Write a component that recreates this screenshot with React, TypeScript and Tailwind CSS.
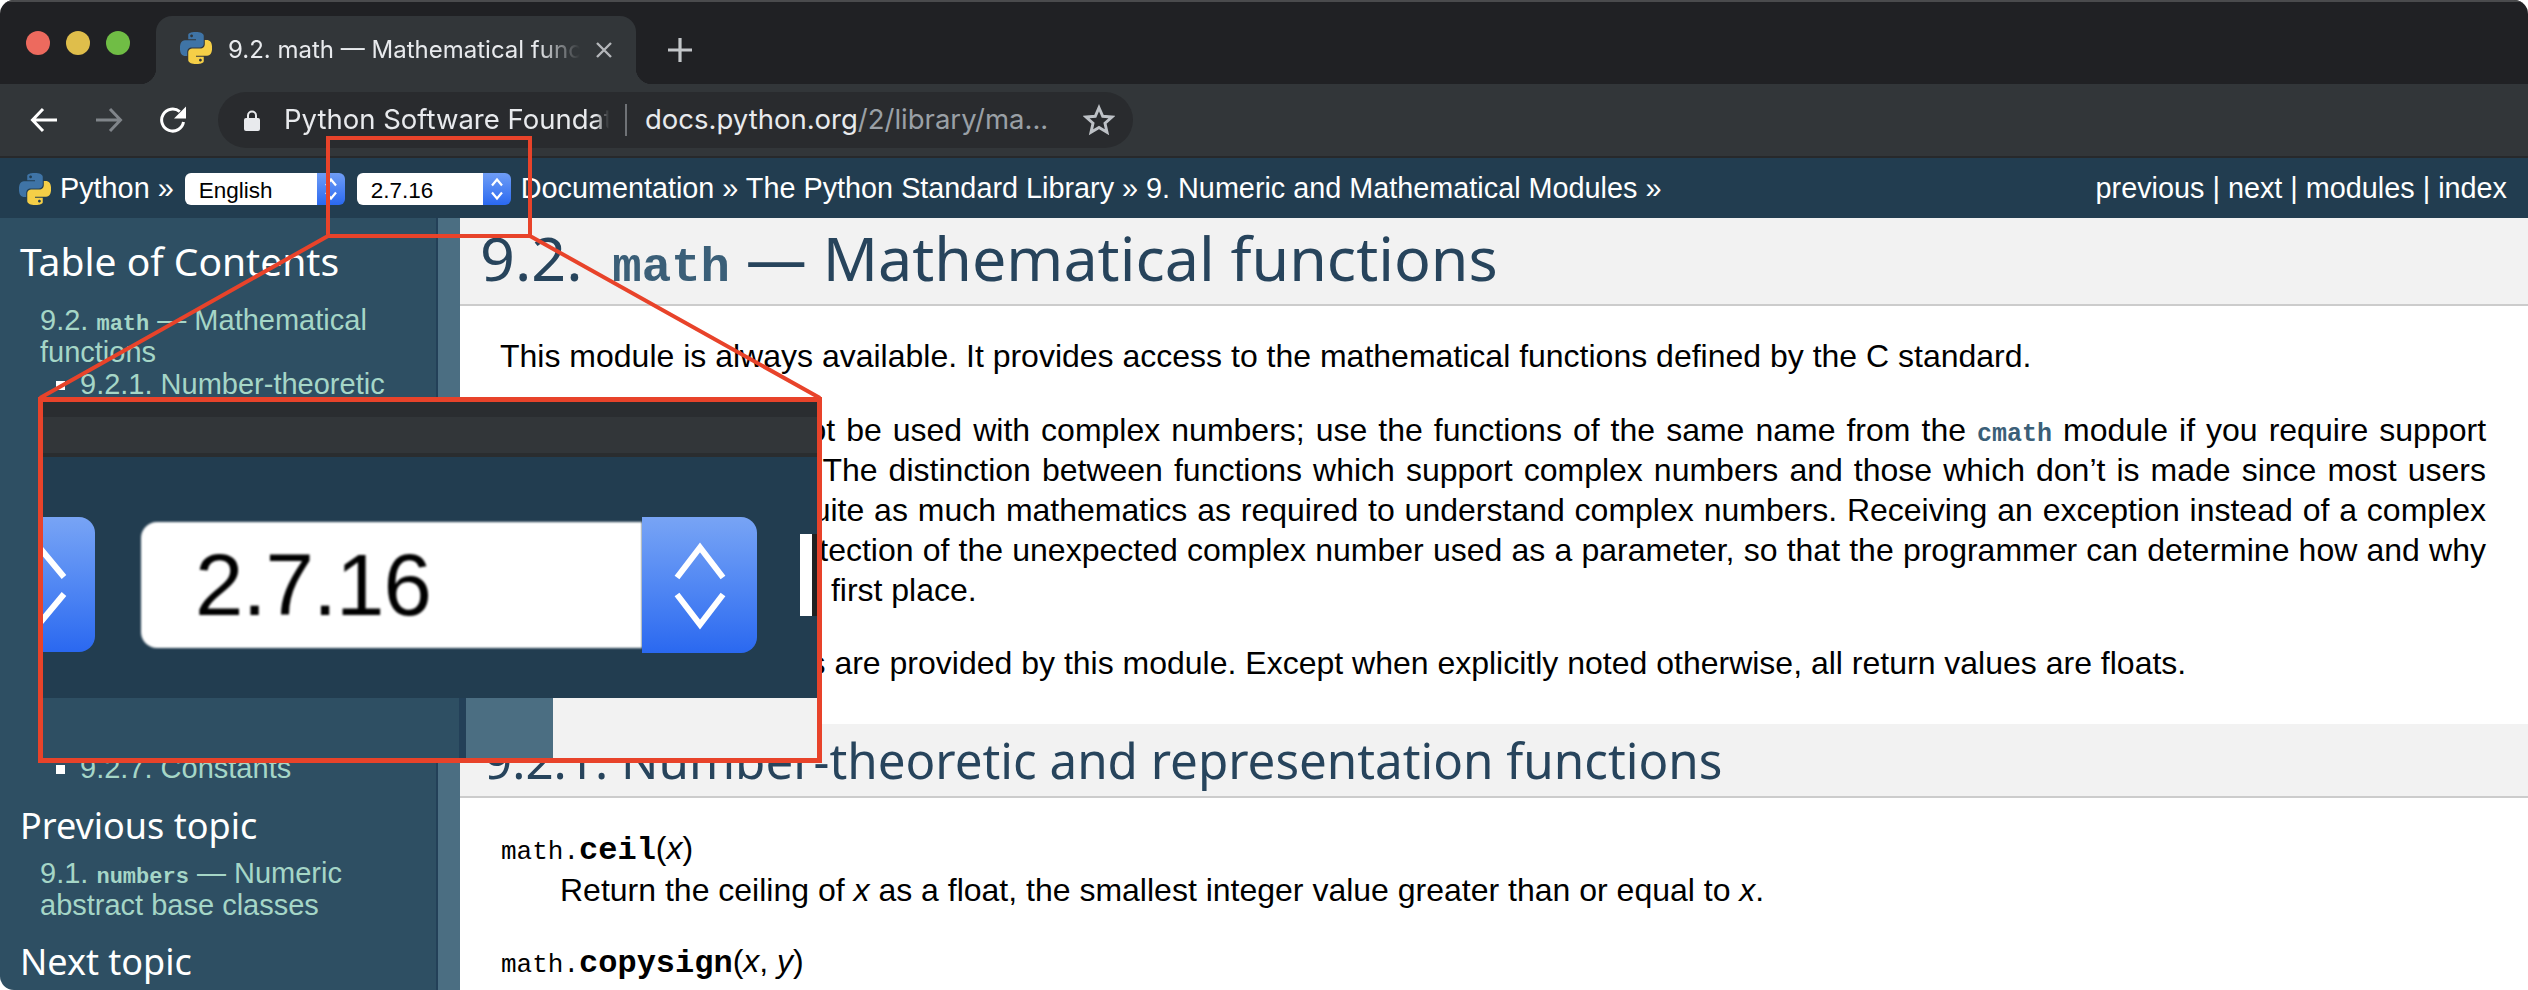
const sans = "font-['Liberation_Sans',Arial,sans-serif]";
const mono = "font-['Liberation_Mono',monospace]";
const head = "font-['Noto_Sans',sans-serif]";

const contents = [
  "9.2.1. Number-theoretic and representation functions",
  "9.2.2. Power and logarithmic functions",
  "9.2.3. Trigonometric functions",
  "9.2.4. Angular conversion functions",
  "9.2.5. Hyperbolic functions",
  "9.2.6. Special functions",
  "9.2.7. Constants",
];

function PythonLogo({ className }: { className: string }) {
  return (
    <svg viewBox="0 0 24 24" className={className}>
      <path
        fill="#3f74a6"
        d="M14.25.18l.9.2.73.26.59.3.45.32.34.34.25.34.16.33.1.3.04.26.02.2-.01.13V8.5l-.05.63-.13.55-.21.46-.26.38-.3.31-.33.25-.35.19-.35.14-.33.1-.3.07-.26.04-.21.02H8.77l-.69.05-.59.14-.5.22-.41.27-.33.32-.27.35-.2.36-.15.37-.1.35-.07.32-.04.27-.02.21v3.06H3.17l-.21-.03-.28-.07-.32-.12-.35-.18-.36-.26-.36-.36-.35-.46-.32-.59-.28-.73-.21-.88-.14-1.05-.05-1.23.06-1.22.16-1.04.24-.87.32-.71.36-.57.4-.44.42-.33.42-.24.4-.16.36-.1.32-.05.24-.01h.16l.06.01h8.16v-.83H6.18l-.01-2.75-.02-.37.05-.34.11-.31.17-.28.25-.26.31-.23.38-.2.44-.18.51-.15.58-.12.64-.1.71-.06.77-.04.84-.02 1.27.05zm-6.3 1.98l-.23.33-.08.41.08.41.23.34.33.22.41.09.41-.09.33-.22.23-.34.08-.41-.08-.41-.23-.33-.33-.22-.41-.09-.41.09z"
      />
      <path
        fill="#f5cf47"
        d="M21.04 6.11l.28.06.32.12.35.18.36.27.36.35.35.47.32.59.28.73.21.88.14 1.04.05 1.23-.06 1.23-.16 1.04-.24.86-.32.71-.36.57-.4.45-.42.33-.42.24-.4.16-.36.09-.32.05-.24.02-.16-.01h-8.22v.82h5.84l.01 2.76.02.36-.05.34-.11.31-.17.29-.25.25-.31.24-.38.2-.44.17-.51.15-.58.13-.64.09-.71.07-.77.04-.84.01-1.27-.04-1.07-.14-.9-.2-.73-.25-.59-.3-.45-.33-.34-.34-.25-.34-.16-.33-.1-.3-.04-.25-.02-.2.01-.13v-5.34l.05-.64.13-.54.21-.46.26-.38.3-.32.33-.24.35-.2.35-.14.33-.1.3-.06.26-.04.21-.02.13-.01h5.84l.69-.05.59-.14.5-.21.41-.28.33-.32.27-.35.2-.36.15-.36.1-.35.07-.32.04-.28.02-.21V6.07h2.09l.14.01zm-6.47 14.25l-.23.33-.08.41.08.41.23.33.33.23.41.08.41-.08.33-.23.23-.33.08-.41-.08-.41-.23-.33-.33-.23-.41-.08-.41.08z"
      />
    </svg>
  );
}

function Stepper() {
  return (
    <svg viewBox="0 0 28 32" fill="none" stroke="white" strokeWidth="2.2" className="h-full w-full">
      <path d="M9 12.5L14 6.5L19 12.5M9 19.5L14 25.5L19 19.5" />
    </svg>
  );
}

function Select({ label, width }: { label: string; width: string }) {
  return (
    <div className={`flex h-[32px] items-stretch ${width}`}>
      <div className={`flex-1 rounded-l-[6px] bg-white pl-[14px] text-[22.5px] leading-[36px] text-black ${sans}`}>{label}</div>
      <div className="w-[28px] rounded-r-[6px] bg-gradient-to-b from-[#6f9df5] to-[#2a68f0]">
        <Stepper />
      </div>
    </div>
  );
}

function Browser() {
  return (
    <div className="shrink-0">
      <div className="relative h-[84px] border-t-2 border-[#4a4b4d] bg-[#202124]">
        <div className="flex h-full items-end">
          <div className="flex h-full w-[156px] items-center gap-[16px] pl-[26px]">
            <span className="h-[24px] w-[24px] rounded-full bg-[#ed6a5e]" />
            <span className="h-[24px] w-[24px] rounded-full bg-[#dfbe4b]" />
            <span className="h-[24px] w-[24px] rounded-full bg-[#70bd45]" />
          </div>
          <div className="relative flex h-[68px] w-[480px] items-center rounded-t-[16px] bg-[#323639] pl-[24px]">
            <span className="absolute bottom-0 -left-[16px] h-[16px] w-[16px] bg-[radial-gradient(circle_at_0_0,#202124_16px,#323639_16.5px)]" />
            <span className="absolute -right-[16px] bottom-0 h-[16px] w-[16px] bg-[radial-gradient(circle_at_100%_0,#202124_16px,#323639_16.5px)]" />
            <PythonLogo className="mb-[4px] h-[32px] w-[32px] shrink-0" />
            <div className="ml-[16px] w-[352px] overflow-hidden whitespace-nowrap font-['Inter',sans-serif] text-[24px] text-[#e8eaed] [mask-image:linear-gradient(to_right,black_88%,transparent)]">
              9.2. math — Mathematical functions
            </div>
            <svg viewBox="0 0 16 16" className="ml-[16px] h-[16px] w-[16px]" stroke="#b4b7ba" strokeWidth="2.4">
              <path d="M1 1L15 15M15 1L1 15" />
            </svg>
          </div>
          <svg viewBox="0 0 24 24" className="mb-[22px] ml-[32px] h-[24px] w-[24px]" stroke="#c3c6c9" strokeWidth="3.2">
            <path d="M12 0V24M0 12H24" />
          </svg>
        </div>
      </div>
      <div className="flex h-[74px] items-center border-b-2 border-[#27292b] bg-[#323639]">
        <svg viewBox="0 0 28 26" fill="none" stroke="#fff" strokeWidth="3" className="ml-[30px] h-[26px] w-[28px]">
          <path d="M27 13H3M13 2L2.5 13L13 24" />
        </svg>
        <svg viewBox="0 0 28 26" fill="none" stroke="#80858a" strokeWidth="3" className="ml-[37px] h-[26px] w-[28px]">
          <path d="M1 13H25M15 2L25.5 13L15 24" />
        </svg>
        <svg viewBox="0 0 28 28" fill="none" className="ml-[36px] h-[28px] w-[28px]">
          <path d="M24.5 16A11 11 0 1 1 20.8 5.7" stroke="#fff" strokeWidth="3" />
          <path d="M27 0.5V12.5H15Z" fill="#fff" />
        </svg>
        <div className="ml-[31px] flex h-[56px] w-[915px] items-center rounded-full bg-[#292b2e] pl-[26px]">
          <svg viewBox="0 0 16 22" className="h-[22px] w-[16px] shrink-0">
            <path d="M4 10V6.5a4 4 0 0 1 8 0V10" fill="none" stroke="#e8eaed" strokeWidth="2" />
            <rect x="0" y="9" width="16" height="13" rx="2" fill="#e8eaed" />
          </svg>
          <div className="ml-[24px] w-[325px] shrink-0 overflow-hidden whitespace-nowrap font-['Inter',sans-serif] text-[27.5px] text-[#e8eaed] [mask-image:linear-gradient(to_right,black_96%,transparent)]">
            Python Software Foundation [US]
          </div>
          <span className="ml-[16px] h-[32px] w-[2px] shrink-0 bg-[#6f7276]" />
          <div className="ml-[18px] whitespace-nowrap font-['Inter',sans-serif] text-[27.5px] text-[#e8eaed]">
            docs.python.org<span className="text-[#9aa0a6]">/2/library/ma...</span>
          </div>
          <svg viewBox="0 0 24 24" fill="none" stroke="#bdc1c6" strokeWidth="2.2" className="mr-[18px] ml-auto h-[32px] w-[32px] shrink-0">
            <path d="M12 2.8L14.8 9.2L21.7 9.8L16.5 14.4L18 21.2L12 17.6L6 21.2L7.5 14.4L2.3 9.8L9.2 9.2Z" />
          </svg>
        </div>
      </div>
    </div>
  );
}

function NavBar() {
  return (
    <div className={`flex h-[60px] shrink-0 items-center justify-between bg-[#223d50] pt-[1px] pr-[21px] pl-[19px] text-[28.8px] whitespace-nowrap text-white ${sans}`}>
      <div className="flex items-center">
        <PythonLogo className="h-[32px] w-[32px]" />
        <span className="ml-[9px]">Python »</span>
        <div className="ml-[11px] flex gap-[12px]">
          <Select label="English" width="w-[160px]" />
          <Select label="2.7.16" width="w-[154px]" />
        </div>
        <span className="ml-[10px]">Documentation » The Python Standard Library » 9. Numeric and Mathematical Modules »</span>
      </div>
      <div>previous | next | modules | index</div>
    </div>
  );
}

function Sidebar() {
  return (
    <aside className={`w-[460px] shrink-0 overflow-hidden border-r-[22px] border-[#4b6e82] bg-[#2e4f63] pt-[18px] pl-[20px] text-[29px] leading-[32px] text-[#a5d6c7] shadow-[inset_-2px_0_0_#234058] ${sans}`}>
      <h3 className={`text-[39px] leading-[50px] text-white ${head}`}>Table of Contents</h3>
      <div className="mt-[18px] ml-[20px] w-[350px]">
        9.2. <span className={`text-[22px] leading-[0] font-bold ${mono}`}>math</span> — Mathematical functions
        <ul className="ml-[40px] list-[square] marker:text-white">
          {contents.map((item) => (
            <li key={item}>{item}</li>
          ))}
        </ul>
      </div>
      <h4 className={`mt-[17px] text-[36px] leading-[50px] text-white ${head}`}>Previous topic</h4>
      <div className="mt-[6px] ml-[20px] w-[350px]">
        9.1. <span className={`text-[22px] leading-[0] font-bold ${mono}`}>numbers</span> — Numeric abstract base classes
      </div>
      <h4 className={`mt-[16px] text-[36px] leading-[50px] text-white ${head}`}>Next topic</h4>
    </aside>
  );
}

function Article() {
  return (
    <main className={`min-w-0 flex-1 overflow-hidden bg-white text-[32px] leading-[40px] text-black ${sans}`}>
      <h1 className={`flex h-[88px] items-center border-b-2 border-[#cccccc] bg-[#f2f2f2] pt-[4px] pl-[20px] text-[61px] text-[#27445c] ${head}`}>
        <span>
          9.2. <span className={`ml-[14px] text-[49px] font-bold text-[#3b5f78] ${mono}`}>math</span> — Mathematical functions
        </span>
      </h1>
      <div className="pr-[42px] pl-[40px]">
        <p className="mt-[30px]">
          This module is always available. It provides access to the mathematical functions defined by the C standard.
        </p>
        <p className="mt-[34px] text-justify">
          These functions cannot be used with complex numbers; use the functions of the same name from the{" "}
          <span className={`text-[25px] leading-[0] font-bold text-[#3b5f78] ${mono}`}>cmath</span> module if you require support{" "}
          <span className="whitespace-nowrap">for complex</span> numbers. The distinction between functions which support complex numbers and those which don’t is made
          since most users do not want to learn quite as much mathematics as required to understand complex numbers.
          Receiving an exception instead of a complex result allows earlier detection of the unexpected complex number used
          as a parameter, so that the programmer can determine how and why it was generated in the first place.
        </p>
        <p className="mt-[33px]">
          The following functions are provided by this module. Except when explicitly noted otherwise, all return values are
          floats.
        </p>
      </div>
      <h2 className={`mt-[41px] flex h-[74px] items-center border-b-2 border-[#cccccc] bg-[#f2f2f2] pl-[24px] text-[49.3px] text-[#27445c] ${head}`}>
        9.2.1. Number-theoretic and representation functions
      </h2>
      <div className="pt-[30px] pl-[41px]">
        <div>
          <span className={`text-[26px] leading-[0] ${mono}`}>math.</span>
          <span className={`text-[32px] leading-[0] font-bold ${mono}`}>ceil</span>(<i>x</i>)
        </div>
        <p className="mt-[2px] ml-[59px]">
          Return the ceiling of <i>x</i> as a float, the smallest integer value greater than or equal to <i>x</i>.
        </p>
        <div className="mt-[31px]">
          <span className={`text-[26px] leading-[0] ${mono}`}>math.</span>
          <span className={`text-[32px] leading-[0] font-bold ${mono}`}>copysign</span>(<i>x</i>, <i>y</i>)
        </div>
      </div>
    </main>
  );
}

function Callout() {
  return (
    <>
      <div className="absolute top-[136px] left-[326px] h-[102px] w-[206px] border-4 border-[#e8432a]" />
      <svg className="pointer-events-none absolute top-0 left-0 h-[990px] w-[2528px]" viewBox="0 0 2528 990" fill="none" stroke="#e8432a" strokeWidth="4">
        <path d="M328 236L40 398M530 236L820 398" />
      </svg>
      <div className="absolute top-[397px] left-[38px] flex h-[366px] w-[784px] flex-col overflow-hidden border-[5px] border-[#e8432a] bg-[#223d50]">
        <div className="h-[15px] shrink-0 bg-[#2a2d30]" />
        <div className="h-[36px] shrink-0 bg-[#323639]" />
        <div className="h-[4px] shrink-0 bg-[#2a2d2f]" />
        <div className="relative flex-1">
          <div className="absolute top-[60px] -left-[60px] h-[135px] w-[112px] rounded-[16px] bg-gradient-to-b from-[#78a4f5] to-[#2a68f0]">
            <svg viewBox="0 0 30 135" fill="none" stroke="white" strokeWidth="6" className="absolute top-0 left-[60px] h-[135px] w-[30px]">
              <path d="M21 60L-4 30M21 77L-4 107" />
            </svg>
          </div>
          <div className="absolute top-[65px] left-[98px] flex h-[126px] w-[616px] rounded-[16px]">
            <div className={`flex-1 rounded-l-[16px] bg-white pl-[54px] text-[87px] leading-[126px] tracking-[-1px] text-black blur-[1px] ${sans}`}>2.7.16</div>
            <div className="relative -my-[5px] w-[115px] rounded-r-[16px] bg-gradient-to-b from-[#78a4f5] to-[#2a68f0]">
              <svg viewBox="0 0 115 135" fill="none" stroke="white" strokeWidth="6" className="h-full w-full">
                <path d="M35 60L58 30L81 60M35 77L58 107L81 77" />
              </svg>
            </div>
          </div>
          <div className="absolute top-[77px] right-0 h-[82px] w-[17px] bg-white">
            <div className="ml-[12px] h-full w-[5px] bg-[#222]" />
          </div>
        </div>
        <div className="flex h-[60px] shrink-0">
          <div className="w-[416px] bg-[#2e4f63]" />
          <div className="w-[7px] bg-[#234058]" />
          <div className="w-[87px] bg-[#4b6e82]" />
          <div className="flex-1 bg-[#f2f2f2]" />
        </div>
      </div>
    </>
  );
}

export default function App() {
  return (
    <div className="relative h-[990px] w-[2528px] overflow-hidden bg-white">
      <div className="flex h-full flex-col overflow-hidden rounded-t-[14px] rounded-bl-[14px]">
        <Browser />
        <NavBar />
        <div className="flex min-h-0 flex-1">
          <Sidebar />
          <Article />
        </div>
      </div>
      <Callout />
    </div>
  );
}
